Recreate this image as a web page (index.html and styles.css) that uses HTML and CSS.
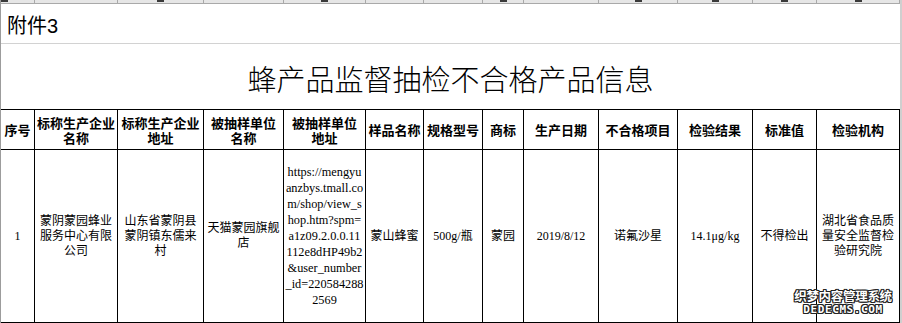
FILE: index.html
```html
<!DOCTYPE html>
<html lang="zh-CN">
<head>
<meta charset="utf-8">
<title>蜂产品监督抽检不合格产品信息</title>
<link rel="stylesheet" href="styles.css">
</head>
<body>
<div class="sheet">
  <div class="grid">
    <div class="strip strip-left"><span class="tick"></span></div>
    <div class="strip"></div>
    <div class="strip"><span class="tick"></span></div>
    <div class="strip"></div>
    <div class="strip"><span class="tick"></span></div>
    <div class="strip"></div>
    <div class="strip"></div>
    <div class="strip"><span class="tick"></span></div>
    <div class="strip"></div>
    <div class="strip"><span class="tick"></span></div>
    <div class="strip"><span class="tick"></span></div>
    <div class="strip"><span class="tick"></span></div>
    <div class="strip"><span class="tick"></span></div>

    <div class="note">附件3</div>
    <div class="title">蜂产品监督抽检不合格产品信息</div>

    <div class="cell head">序号</div>
    <div class="cell head">标称生产企业<br>名称</div>
    <div class="cell head">标称生产企业<br>地址</div>
    <div class="cell head">被抽样单位<br>名称</div>
    <div class="cell head">被抽样单位<br>地址</div>
    <div class="cell head">样品名称</div>
    <div class="cell head">规格型号</div>
    <div class="cell head">商标</div>
    <div class="cell head">生产日期</div>
    <div class="cell head">不合格项目</div>
    <div class="cell head">检验结果</div>
    <div class="cell head">标准值</div>
    <div class="cell head">检验机构</div>

    <div class="cell data">1</div>
    <div class="cell data">蒙阴蒙园蜂业<br>服务中心有限<br>公司</div>
    <div class="cell data">山东省蒙阴县<br>蒙阴镇东儒来<br>村</div>
    <div class="cell data">天猫蒙园旗舰<br>店</div>
    <div class="cell data url">https://mengyu<br>anzbys.tmall.co<br>m/shop/view_s<br>hop.htm?spm=<br>a1z09.2.0.0.11<br>112e8dHP49b2<br>&amp;user_number<br>_id=220584288<br>2569</div>
    <div class="cell data">蒙山蜂蜜</div>
    <div class="cell data">500g/瓶</div>
    <div class="cell data">蒙园</div>
    <div class="cell data">2019/8/12</div>
    <div class="cell data">诺氟沙星</div>
    <div class="cell data">14.1μg/kg</div>
    <div class="cell data">不得检出</div>
    <div class="cell data">湖北省食品质<br>量安全监督检<br>验研究院</div>
  </div>
  <div class="watermark">
    <div class="wm-cn">织梦内容管理系统</div>
    <div class="wm-en">DEDECMS.COM</div>
  </div>
</div>
</body>
</html>
```

FILE: styles.css
```css
html, body {
  margin: 0;
  padding: 0;
  background: #ffffff;
}

.sheet {
  position: relative;
  box-sizing: border-box;
  width: 902px;
  height: 323px;
  overflow: hidden;
  border-left: 1px solid #9c9c9c;
  border-right: 2px solid #cfcfcf;
  background: #ffffff;
  color: #000;
}

.grid {
  display: grid;
  grid-template-columns: 34px 83px 86px 80px 82px 58px 59px 41px 75px 79px 75px 64px 83px;
  grid-template-rows: 4px 40px 66px 40px 173px;
}

.strip {
  box-sizing: border-box;
  background: #e6e6e6;
  border-right: 1px solid #a9a9a9;
  border-bottom: 1px solid #a9a9a9;
  display: flex;
  justify-content: center;
  align-items: flex-start;
  overflow: hidden;
}

.strip-left {
  justify-content: flex-start;
}

.tick {
  display: block;
  width: 7px;
  height: 2px;
  background: #3a3a3a;
}

.note {
  grid-column: 1 / -1;
  box-sizing: border-box;
  border-bottom: 1px solid #d2d2d2;
  display: flex;
  align-items: center;
  padding: 2px 0 0 6px;
  font-family: "Liberation Sans", "Noto Sans CJK SC", sans-serif;
  font-size: 20px;
}

.title {
  grid-column: 1 / -1;
  box-sizing: border-box;
  border-bottom: 1px solid #000;
  display: flex;
  align-items: center;
  justify-content: center;
  padding-top: 2px;
  font-family: "Noto Sans CJK SC", sans-serif;
  font-weight: 300;
  font-size: 29px;
}

.cell {
  box-sizing: border-box;
  border-right: 1px solid #000;
  border-bottom: 1px solid #000;
  display: flex;
  align-items: center;
  justify-content: center;
  text-align: center;
  overflow: hidden;
}

.head {
  font-family: "Noto Sans CJK SC", sans-serif;
  font-weight: 700;
  font-size: 13px;
  line-height: 15px;
}

.data {
  font-family: "Liberation Serif", "Noto Sans CJK SC", serif;
  font-size: 12px;
  line-height: 15px;
}

.url {
  line-height: 16px;
  font-size: 12.3px;
}

.watermark {
  position: absolute;
  left: 791px;
  top: 289px;
  width: 102px;
  text-align: center;
  color: #ffffff;
  font-weight: 700;
  text-shadow:
    1px 0 0 #222, -1px 0 0 #222, 0 1px 0 #222, 0 -1px 0 #222,
    1px 1px 0 #222, -1px -1px 0 #222, 1px -1px 0 #222, -1px 1px 0 #222;
}

.wm-cn {
  font-family: "Noto Sans CJK SC", sans-serif;
  font-size: 12.5px;
  line-height: 14px;
  letter-spacing: -0.3px;
}

.wm-en {
  font-family: "DejaVu Sans Mono", monospace;
  font-size: 11px;
  line-height: 12px;
  letter-spacing: 0.6px;
  margin-top: 1px;
}
```
